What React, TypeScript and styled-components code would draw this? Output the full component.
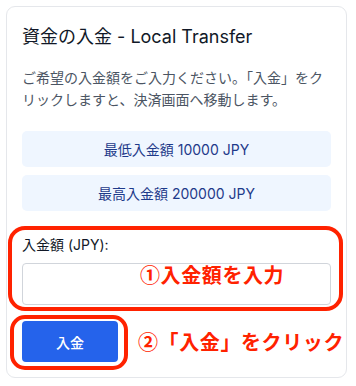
import React, { useState } from "react";
import styled, { createGlobalStyle } from "styled-components";

const GlobalStyle = createGlobalStyle`
  * { box-sizing: border-box; }
  body {
    margin: 0;
    background: #ffffff;
    font-family: Inter, "Noto Sans CJK JP", sans-serif;
  }
`;

function App() {
  const [amount, setAmount] = useState<string>("");

  return (
    <>
      <GlobalStyle />
      <Card>
        <Title>資金の入金 - Local Transfer</Title>
        <Description>
          ご希望の入金額をご入力ください。「入金」をクリックしますと、決済画面へ移動します。
        </Description>
        <Limits>
          <LimitBox>最低入金額 10000 JPY</LimitBox>
          <LimitBox>最高入金額 200000 JPY</LimitBox>
        </Limits>
        <Field>
          <Label htmlFor="amount">入金額 (JPY):</Label>
          <Input
            id="amount"
            value={amount}
            onChange={(e) => setAmount(e.target.value)}
          />
          {/* 注釈の赤枠 */}
          <Highlight $top={-9} $left={-14} $right={-12} $bottom={-6} $radius={17} />
          <Note $floating>①入金額を入力</Note>
        </Field>
        <ActionRow>
          <ButtonWrap>
            <SubmitButton>入金</SubmitButton>
            <Highlight $top={-6} $left={-12} $right={-10} $bottom={-8} $radius={15} />
          </ButtonWrap>
          <Note>②「入金」をクリック</Note>
        </ActionRow>
      </Card>
    </>
  );
}

const Card = styled.div`
  display: flex;
  flex-direction: column;
  width: 341px;
  margin: 6px;
  padding: 16px 15px 15px;
  border: 1px solid #e5e7eb;
  border-radius: 9px;
  background: #ffffff;
`;

const Title = styled.h2`
  margin: 0;
  font-size: 18px;
  font-weight: 400;
  line-height: 28px;
  color: #111827;
`;

const Description = styled.p`
  margin: 16px 0 0;
  font-size: 14px;
  line-height: 22px;
  color: #4b5563;
`;

const Limits = styled.div`
  display: flex;
  flex-direction: column;
  gap: 8px;
  margin-top: 20px;
`;

const LimitBox = styled.div`
  display: flex;
  align-items: center;
  justify-content: center;
  height: 36px;
  border-radius: 5px;
  background: #eff6ff;
  color: #1e3a8a;
  font-size: 14px;
`;

const Field = styled.div`
  position: relative;
  display: flex;
  flex-direction: column;
  gap: 8px;
  margin-top: 24px;
`;

const Label = styled.label`
  font-size: 14px;
  line-height: 20px;
  color: #111827;
`;

const Input = styled.input`
  height: 42px;
  padding: 0 12px;
  border: 1px solid #d1d5db;
  border-radius: 4px;
  font-size: 14px;
  font-family: inherit;
  outline: none;
`;

const Highlight = styled.div<{
  $top: number;
  $left: number;
  $right: number;
  $bottom: number;
  $radius: number;
}>`
  position: absolute;
  top: ${(p) => p.$top}px;
  left: ${(p) => p.$left}px;
  right: ${(p) => p.$right}px;
  bottom: ${(p) => p.$bottom}px;
  border: 4px solid #ff2200;
  border-radius: ${(p) => p.$radius}px;
  pointer-events: none;
`;

const Note = styled.span<{ $floating?: boolean }>`
  font-family: "Noto Sans CJK JP", sans-serif;
  font-size: 20px;
  font-weight: 700;
  line-height: 28px;
  letter-spacing: 0.6px;
  color: #ff2200;
  white-space: nowrap;
  ${(p) =>
    p.$floating &&
    `
    position: absolute;
    top: 26px;
    left: 118px;
  `}
`;

const ActionRow = styled.div`
  display: flex;
  align-items: center;
  gap: 20px;
  margin-top: 16px;
`;

const ButtonWrap = styled.div`
  position: relative;
  display: flex;
`;

const SubmitButton = styled.button`
  width: 96px;
  height: 41px;
  border: none;
  border-radius: 4px;
  background: #2563eb;
  color: #ffffff;
  font-size: 14px;
  font-weight: 500;
  font-family: inherit;
  cursor: pointer;
`;

export default App;
